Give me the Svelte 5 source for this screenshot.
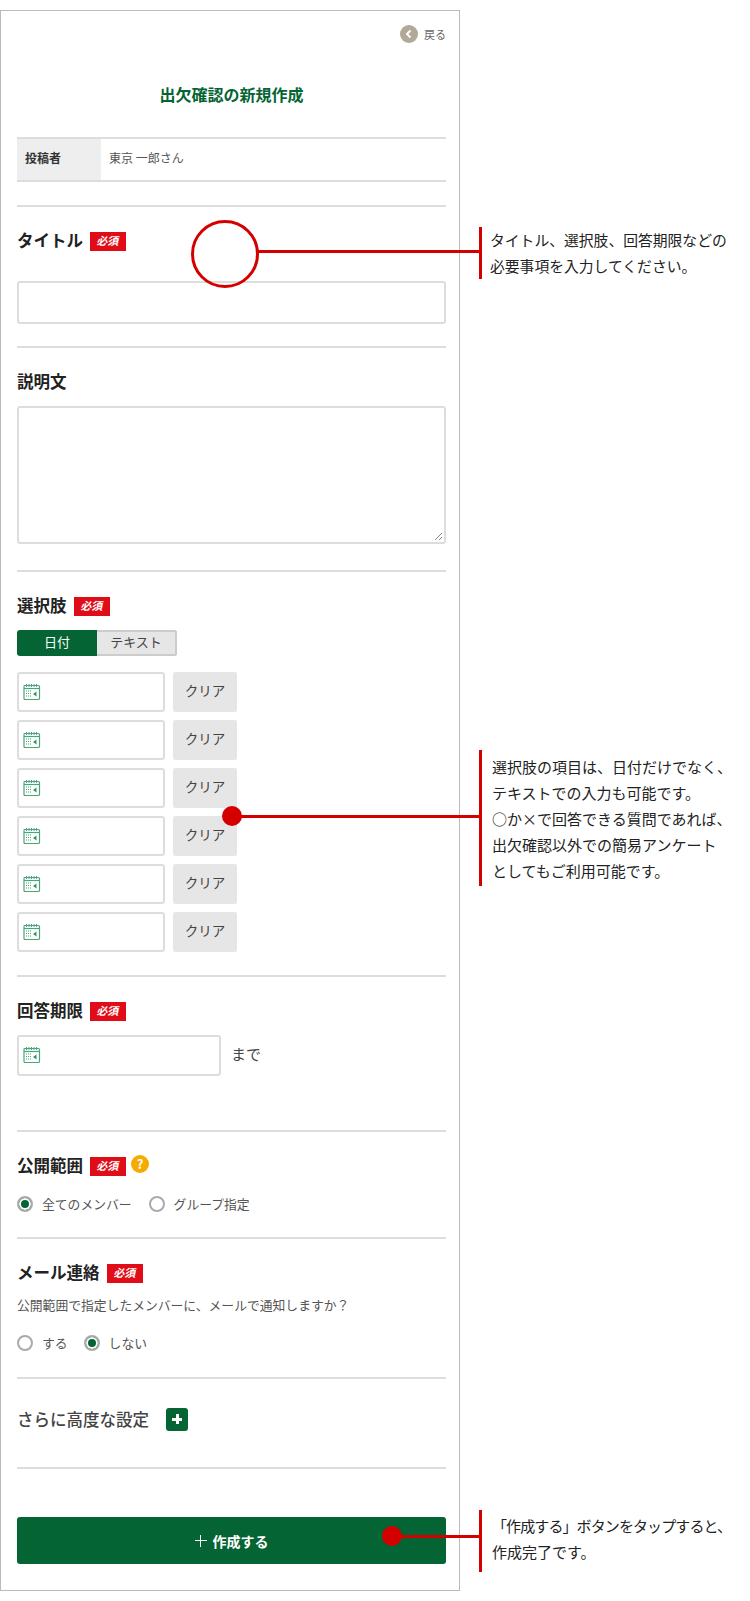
<script>
  const dates = [1, 2, 3, 4, 5, 6]
  const notes = [
    { cls: 'n1', lines: ['タイトル、選択肢、回答期限などの', '必要事項を入力してください。'] },
    { cls: 'n2', lines: ['選択肢の項目は、日付だけでなく、', 'テキストでの入力も可能です。', '○か×で回答できる質問であれば、', '出欠確認以外での簡易アンケート', 'としてもご利用可能です。'] },
    { cls: 'n3', lines: ['「作成する」ボタンをタップすると、', '作成完了です。'] }
  ]
</script>

{#snippet calendar()}
  <svg class="cal" width="18" height="18" viewBox="0 0 18 18" fill="none" stroke="#4aa67a">
    <rect x="1" y="2.500" width="15.500" height="14" rx="1" stroke-width="1.200" />
    <path d="M1 5.500h15.500" stroke-width="1.200" />
    <path d="M3.500 1v3M6 1v3M8.500 1v3M11 1v3M13.500 1v3" stroke-width="1" />
    <path d="M3 8h6M3 10.500h6M3 13h6" stroke-width="1.200" stroke-dasharray="1 1" />
    <path d="M13.500 8.500l-3.500 2.500 3.500 2.500z" fill="#2f9565" stroke="none" />
  </svg>
{/snippet}

{#snippet badge()}
  <span class="badge"><span class="badge-text">必須</span></span>
{/snippet}

{#snippet radio(text, on)}
  <span class="radio">
    <span class="ring" class:on></span>
    {text}
  </span>
{/snippet}

<div class="page">
  <main class="card">
    <div class="back">
      <span class="back-icon">
        <svg width="10" height="10" viewBox="0 0 10 10" fill="none" stroke="#fff" stroke-width="2"><path d="M6.500 1.500L3 5l3.500 3.500" /></svg>
      </span>
      戻る
    </div>
    <h1>出欠確認の新規作成</h1>

    <div class="author">
      <div class="author-head">投稿者</div>
      <div class="author-name">東京 一郎さん</div>
    </div>

    <section class="s-title">
      <h2><span class="label">タイトル</span> {@render badge()}</h2>
      <div class="field title-field"></div>
    </section>

    <section class="s-desc">
      <h2><span class="label">説明文</span></h2>
      <div class="field desc-field">
        <svg class="grip" width="10" height="10" viewBox="0 0 10 10" stroke="#888"><path d="M9 2L2 9M9 6L6 9" /></svg>
      </div>
    </section>

    <section class="s-options">
      <h2><span class="label">選択肢</span> {@render badge()}</h2>
      <div class="toggle">
        <span class="tab active">日付</span>
        <span class="tab">テキスト</span>
      </div>
      <div class="rows">
        {#each dates as d (d)}
          <div class="row">
            <div class="field date-field">{@render calendar()}</div>
            <span class="clear">クリア</span>
          </div>
        {/each}
      </div>
    </section>

    <section class="s-deadline">
      <h2><span class="label">回答期限</span> {@render badge()}</h2>
      <div class="row">
        <div class="field deadline-field">{@render calendar()}</div>
        <span class="made">まで</span>
      </div>
    </section>

    <section class="s-scope">
      <h2><span class="label">公開範囲</span> {@render badge()} <span class="help">?</span></h2>
      <div class="radios">
        {@render radio('全てのメンバー', true)}
        {@render radio('グループ指定', false)}
      </div>
    </section>

    <section class="s-mail">
      <h2><span class="label">メール連絡</span> {@render badge()}</h2>
      <p>公開範囲で指定したメンバーに、メールで通知しますか？</p>
      <div class="radios">
        {@render radio('する', false)}
        {@render radio('しない', true)}
      </div>
    </section>

    <section class="s-more">
      <h3>さらに高度な設定</h3>
      <span class="plus"></span>
    </section>

    <section class="s-submit">
      <div class="submit"><span class="submit-plus"></span>作成する</div>
    </section>
  </main>

  <div class="ring-mark"></div>
  <div class="dot d2"></div>
  <div class="dot d3"></div>
  {#each notes as n (n.cls)}
    <aside class="note {n.cls}">
      {#each n.lines as line}
        <div>{line}</div>
      {/each}
    </aside>
  {/each}
</div>

<style>
  :global(body) {
    margin: 0;
    background: #fff;
  }
  .page {
    position: relative;
    width: 750px;
    height: 1601px;
    padding-top: 10px;
    box-sizing: border-box;
    font-family: "Noto Sans CJK JP", "Noto Sans", sans-serif;
    color: #333;
    overflow: hidden;
  }
  .card {
    width: 460px;
    height: 1581px;
    box-sizing: border-box;
    padding: 0 13px 0 16px;
    border: 1px solid #bbb;
  }
  .back {
    display: flex;
    justify-content: flex-end;
    align-items: center;
    gap: 6px;
    padding-top: 13px;
    height: 19px;
    font-size: 11px;
    color: #666;
  }
  .back-icon {
    width: 18px;
    height: 18px;
    border-radius: 50%;
    background: #b0a898;
    display: flex;
    align-items: center;
    justify-content: center;
  }
  h1 {
    margin: 39px 0 0;
    font-size: 16px;
    line-height: 24px;
    font-weight: 700;
    text-align: center;
    color: #056433;
  }
  .author {
    display: flex;
    margin-top: 31px;
    height: 45px;
    box-sizing: border-box;
    border-top: 2px solid #ddd;
    border-bottom: 2px solid #ddd;
    font-size: 12px;
    line-height: 38px;
  }
  .author-head {
    width: 84px;
    padding-left: 8px;
    box-sizing: border-box;
    background: #eee;
    font-weight: 700;
  }
  .author-name {
    padding-left: 8px;
    color: #555;
  }
  section {
    box-sizing: border-box;
    border-top: 2px solid #ddd;
    padding-top: 24px;
  }
  h2 {
    display: flex;
    align-items: center;
    gap: 7px;
    margin: 0;
    height: 20px;
    font-size: 16.500px;
    font-weight: 700;
    color: #222;
  }
  .label {
    margin-bottom: 3px;
  }
  .badge {
    width: 36px;
    height: 19px;
    background: #e00d19;
    color: #fff;
    font-family: "Liberation Serif", "Noto Sans CJK JP", serif;
    font-size: 11px;
    font-weight: 700;
    line-height: 19px;
    text-align: center;
  }
  .badge-text {
    display: inline-block;
    transform: skewX(-10deg);
  }
  .field {
    box-sizing: border-box;
    border: 2px solid #ddd;
    border-radius: 3px;
    background: #fff;
  }
  .s-title {
    margin-top: 23px;
    height: 141px;
  }
  .title-field {
    height: 43px;
    margin-top: 30px;
  }
  .s-desc {
    height: 224px;
  }
  .desc-field {
    position: relative;
    height: 138px;
    margin-top: 14px;
  }
  .grip {
    position: absolute;
    right: 1px;
    bottom: 1px;
  }
  .s-options {
    height: 405px;
  }
  .toggle {
    display: flex;
    width: 160px;
    height: 26px;
    margin-top: 14px;
    border-radius: 3px;
    overflow: hidden;
    font-size: 13px;
    text-align: center;
  }
  .tab {
    flex: 1;
    box-sizing: border-box;
    background: #e6e6e6;
    border: 2px solid #ccc;
    border-left: 0;
    line-height: 20px;
    color: #444;
  }
  .tab.active {
    flex: 0 0 80px;
    background: #056433;
    border: 0;
    line-height: 24px;
    color: #fff;
  }
  .rows {
    display: flex;
    flex-direction: column;
    gap: 8px;
    margin-top: 16px;
  }
  .row {
    display: flex;
    gap: 8px;
  }
  .date-field {
    width: 148px;
    height: 40px;
  }
  .cal {
    display: block;
    margin: 9px 0 0 4px;
  }
  .clear {
    width: 64px;
    height: 40px;
    border-radius: 2px;
    background: #e6e6e6;
    font-size: 13.500px;
    line-height: 36px;
    text-align: center;
    color: #444;
  }
  .s-deadline {
    height: 155px;
  }
  .s-deadline .row {
    gap: 10px;
    margin-top: 14px;
  }
  .deadline-field {
    width: 204px;
    height: 41px;
  }
  .made {
    font-size: 15px;
    line-height: 38px;
    color: #444;
  }
  .s-scope {
    height: 107px;
  }
  .help {
    width: 18px;
    height: 18px;
    margin: -4px 0 0 -2px;
    border-radius: 50%;
    background: #f7ab00;
    color: #fff;
    font-size: 13px;
    line-height: 18px;
    text-align: center;
  }
  .radios {
    display: flex;
    gap: 17px;
    margin-top: 19px;
  }
  .radio {
    display: flex;
    align-items: center;
    gap: 9px;
    font-size: 12.800px;
    line-height: 18px;
    color: #555;
  }
  .ring {
    width: 16px;
    height: 16px;
    box-sizing: border-box;
    border: 2px solid #aaa;
    border-radius: 50%;
    background: #fff;
  }
  .ring.on {
    background: #056433;
    box-shadow: inset 0 0 0 2px #fff;
  }
  .s-mail {
    height: 140px;
  }
  .s-mail p {
    margin: 12px 0 0;
    font-size: 12.800px;
    line-height: 20px;
    color: #555;
  }
  .s-mail .radios {
    gap: 16px;
    margin-top: 19px;
  }
  .s-more {
    display: flex;
    align-items: center;
    gap: 17px;
    height: 90px;
    padding: 0 0 8px;
  }
  h3 {
    margin: 0;
    font-size: 16.500px;
    line-height: 20px;
    font-weight: 500;
    color: #444;
  }
  .plus {
    position: relative;
    width: 22px;
    height: 23px;
    border-radius: 3px;
    background: #056433;
  }
  .plus::before,
  .plus::after {
    content: "";
    position: absolute;
    background: #fff;
  }
  .plus::before {
    left: 6px;
    top: 10px;
    width: 10px;
    height: 3px;
  }
  .plus::after {
    left: 9.500px;
    top: 6.500px;
    width: 3px;
    height: 10px;
  }
  .s-submit {
    padding-top: 48px;
  }
  .submit {
    display: flex;
    align-items: center;
    justify-content: center;
    gap: 6px;
    height: 47px;
    border-radius: 3px;
    background: #056433;
    color: #fff;
    font-size: 14px;
    font-weight: 700;
  }
  .submit-plus {
    position: relative;
    width: 12px;
    height: 12px;
    background: linear-gradient(#fff, #fff) center / 12px 1px no-repeat, linear-gradient(#fff, #fff) center / 1px 12px no-repeat;
  }
  .ring-mark {
    position: absolute;
    left: 191px;
    top: 220px;
    width: 68px;
    height: 68px;
    box-sizing: border-box;
    border: 3px solid #d40000;
    border-radius: 50%;
  }
  .dot {
    position: absolute;
    width: 20px;
    height: 20px;
    border-radius: 50%;
    background: #d40000;
  }
  .d2 {
    left: 222px;
    top: 806px;
  }
  .d3 {
    left: 382px;
    top: 1526px;
  }
  .note {
    position: absolute;
    left: 479px;
    box-sizing: border-box;
    border-left: 3px solid #d40000;
    padding-left: 10px;
    font-size: 15px;
    line-height: 26px;
    color: #222;
    white-space: nowrap;
  }
  .note::before {
    content: "";
    position: absolute;
    height: 3px;
    background: #d40000;
  }
  .n1 {
    top: 227px;
    height: 52px;
    padding-left: 8px;
    font-size: 14.800px;
  }
  .n1::before {
    right: 100%;
    top: 23px;
    width: 225px;
  }
  .n2 {
    top: 750px;
    height: 136px;
    padding-top: 4px;
  }
  .n2::before {
    right: 100%;
    top: 65px;
    width: 246px;
  }
  .n3 {
    top: 1510px;
    height: 62px;
    padding-top: 3px;
  }
  .n3 div:first-child {
    letter-spacing: -0.900px;
  }
  .n3::before {
    right: 100%;
    top: 25px;
    width: 86px;
  }
</style>
